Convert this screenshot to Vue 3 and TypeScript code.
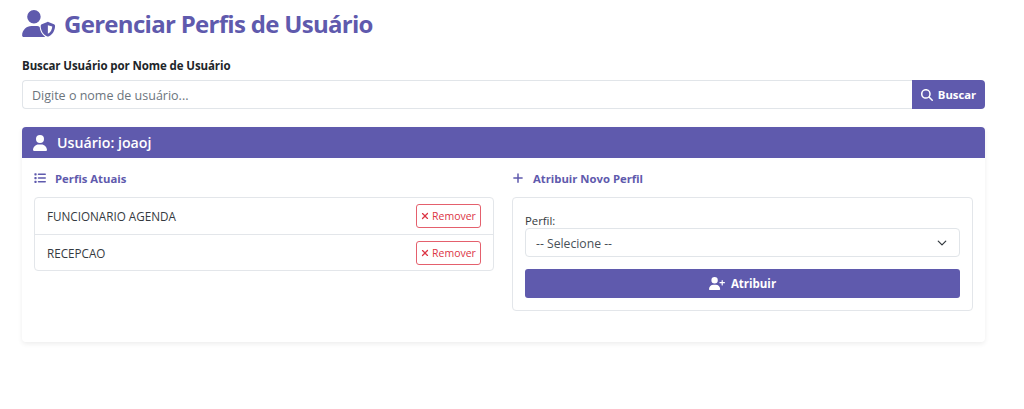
<template>
  <main class="page">
    <h1 class="page__title">
      <svg class="page__icon" viewBox="0 0 640 512" aria-hidden="true">
        <path d="M224 256A128 128 0 1 0 224 0a128 128 0 1 0 0 256zm-45.700 48C79.800 304 0 383.800 0 482.300C0 498.700 13.300 512 29.700 512H418.300c6.500 0 12.500-2.100 17.400-5.700C376.500 466 337 395 332 322.500c-14-12-30-18.500-46.300-18.500H178.300z" />
        <path fill-rule="evenodd" d="M488 224c3 0 6 .6 8.800 1.900l107 45.500c11.700 5 20.400 16.500 20.400 30.400c-.5 53-22.300 149.700-114.300 193.700c-13.500 6.400-29.400 6.400-42.900 0C375 451.500 352.800 355 352.300 301.800c0-13.900 8.700-25.400 20.400-30.400l106.500-45.500c2.800-1.300 5.800-1.900 8.800-1.900zm0 66.800v157.600c55.700-27 80.500-85.800 83.700-137.800L488 290.800z" />
      </svg>
      Gerenciar Perfis de Usuário
    </h1>

    <label class="search__label" for="busca">Buscar Usuário por Nome de Usuário</label>
    <div class="search">
      <input id="busca" class="search__input" type="text" placeholder="Digite o nome de usuário..." />
      <button class="search__btn" type="button">
        <svg class="search__icon" viewBox="0 0 512 512" aria-hidden="true">
          <path d="M416 208c0 45.900-14.900 88.300-40 122.700L502.600 457.400c12.500 12.500 12.500 32.800 0 45.300s-32.800 12.500-45.300 0L330.700 376c-34.400 25.200-76.800 40-122.700 40C93.100 416 0 322.900 0 208S93.100 0 208 0S416 93.100 416 208zM208 352a144 144 0 1 0 0-288 144 144 0 1 0 0 288z" />
        </svg>
        Buscar
      </button>
    </div>

    <section class="card">
      <header class="card__header">
        <svg class="card__icon" viewBox="0 0 448 512" aria-hidden="true">
          <path d="M224 256A128 128 0 1 0 224 0a128 128 0 1 0 0 256zm-45.700 48C79.800 304 0 383.800 0 482.300C0 498.700 13.300 512 29.700 512H418.300c16.400 0 29.700-13.300 29.700-29.700C448 383.800 368.200 304 269.700 304H178.300z" />
        </svg>
        <span>Usuário: joaoj</span>
      </header>

      <div class="card__body">
        <div class="col">
          <h2 class="col__title">
            <svg class="col__icon" viewBox="0 0 512 512" aria-hidden="true">
              <path d="M40 48C26.700 48 16 58.700 16 72v48c0 13.300 10.700 24 24 24H88c13.300 0 24-10.700 24-24V72c0-13.300-10.700-24-24-24H40zM192 64c-17.700 0-32 14.300-32 32s14.300 32 32 32H480c17.700 0 32-14.300 32-32s-14.300-32-32-32H192zm0 160c-17.700 0-32 14.300-32 32s14.300 32 32 32H480c17.700 0 32-14.300 32-32s-14.300-32-32-32H192zm0 160c-17.700 0-32 14.300-32 32s14.300 32 32 32H480c17.700 0 32-14.300 32-32s-14.300-32-32-32H192zM16 232v48c0 13.300 10.700 24 24 24H88c13.300 0 24-10.700 24-24V232c0-13.300-10.700-24-24-24H40c-13.300 0-24 10.700-24 24zM40 368c-13.300 0-24 10.700-24 24v48c0 13.300 10.700 24 24 24H88c13.300 0 24-10.700 24-24V392c0-13.300-10.700-24-24-24H40z" />
            </svg>
            Perfis Atuais
          </h2>
          <ul class="list">
            <li v-for="perfil in perfis" :key="perfil" class="list__item">
              <span>{{ perfil }}</span>
              <button class="remove" type="button">
                <svg class="remove__icon" viewBox="0 0 384 512" aria-hidden="true">
                  <path d="M342.600 150.600c12.500-12.500 12.500-32.800 0-45.300s-32.800-12.500-45.300 0L192 210.700 86.600 105.400c-12.500-12.500-32.800-12.500-45.300 0s-12.500 32.800 0 45.300L146.700 256 41.400 361.400c-12.500 12.500-12.500 32.800 0 45.300s32.800 12.500 45.300 0L192 301.300 297.400 406.600c12.500 12.500 32.800 12.500 45.300 0s12.500-32.800 0-45.300L237.300 256 342.600 150.600z" />
                </svg>
                Remover
              </button>
            </li>
          </ul>
        </div>

        <div class="col">
          <h2 class="col__title">
            <svg class="col__icon" viewBox="0 0 448 512" aria-hidden="true">
              <path d="M256 80c0-17.700-14.300-32-32-32s-32 14.300-32 32V224H48c-17.700 0-32 14.300-32 32s14.300 32 32 32H192V432c0 17.700 14.300 32 32 32s32-14.300 32-32V288H400c17.700 0 32-14.300 32-32s-14.300-32-32-32H256V80z" />
            </svg>
            Atribuir Novo Perfil
          </h2>
          <form class="assign" @submit.prevent>
            <label class="assign__label" for="perfil">Perfil:</label>
            <div class="select">
              <span>-- Selecione --</span>
              <svg class="select__arrow" viewBox="0 0 16 16" aria-hidden="true">
                <path fill="none" stroke="#343a40" stroke-linecap="round" stroke-linejoin="round" stroke-width="2" d="m2 5 6 6 6-6" />
              </svg>
            </div>
            <button class="assign__btn" type="submit">
              <svg class="assign__icon" viewBox="0 0 640 512" aria-hidden="true">
                <path d="M96 128a128 128 0 1 1 256 0A128 128 0 1 1 96 128zM0 482.300C0 383.800 79.800 304 178.300 304h91.400C368.200 304 448 383.800 448 482.300c0 16.400-13.300 29.700-29.700 29.700H29.700C13.300 512 0 498.700 0 482.300zM504 312V248H440c-13.300 0-24-10.700-24-24s10.700-24 24-24h64V136c0-13.300 10.700-24 24-24s24 10.700 24 24v64h64c13.300 0 24 10.700 24 24s-10.700 24-24 24H552v64c0 13.300-10.700 24-24 24s-24-10.700-24-24z" />
              </svg>
              Atribuir
            </button>
          </form>
        </div>
      </div>
    </section>
  </main>
</template>

<script setup lang="ts">
const perfis: string[] = ["FUNCIONARIO AGENDA", "RECEPCAO"];
</script>

<style>
html,
body {
  margin: 0;
  background: #fff;
}
</style>

<style scoped>
.page {
  box-sizing: border-box;
  width: 1024px;
  height: 409px;
  overflow: hidden;
  padding: 6px 39px 0 22px;
  font-family: "Open Sans", "Noto Sans", sans-serif;
  font-size: 12px;
  color: #212529;
}

.page__title {
  display: flex;
  align-items: center;
  gap: 8px;
  height: 34px;
  margin: 0 0 17px;
  font-size: 24px;
  font-weight: 700;
  letter-spacing: -0.7px;
  color: #5f5aad;
}

.page__icon {
  width: 34px;
  height: 27px;
  fill: #5f5aad;
}

.search__label {
  display: block;
  height: 23px;
  line-height: 17px;
  font-size: 11.5px;
  font-weight: 700;
  letter-spacing: -0.1px;
  color: #212529;
}

.search {
  display: flex;
  height: 29px;
}

.search__input {
  flex: 1;
  box-sizing: border-box;
  min-width: 0;
  padding: 1px 9px 0;
  border: 1px solid #e1e5e9;
  border-right: 0;
  border-radius: 4px 0 0 4px;
  outline: none;
  font: inherit;
  font-size: 12.5px;
}

.search__input::placeholder {
  color: #6c757d;
}

.search__btn {
  display: flex;
  align-items: center;
  justify-content: center;
  gap: 5px;
  width: 73px;
  padding: 0;
  border: 0;
  border-radius: 0 4px 4px 0;
  background: #5f5aad;
  color: #fff;
  font: inherit;
  font-size: 11.3px;
  font-weight: 700;
}

.search__icon {
  width: 12px;
  height: 12px;
  fill: #fff;
}

.card {
  height: 215px;
  margin-top: 18px;
  border-radius: 4px;
  background: #fff;
  box-shadow: 0 2px 5px rgba(0, 0, 0, 0.07);
}

.card__header {
  display: flex;
  align-items: center;
  gap: 10px;
  height: 31px;
  padding-left: 11px;
  border-radius: 4px 4px 0 0;
  background: #5f5aad;
  color: #fff;
  font-size: 14.2px;
  font-weight: 600;
}

.card__icon {
  width: 14px;
  height: 16px;
  fill: #fff;
}

.card__body {
  display: grid;
  grid-template-columns: 460px 461px;
  gap: 18px;
  padding: 12px 12px 0;
}

.col__title {
  display: flex;
  align-items: center;
  gap: 9px;
  height: 16px;
  margin: 0 0 11px;
  font-size: 11.3px;
  font-weight: 700;
  color: #5f5aad;
}

.col__icon {
  width: 12px;
  height: 12px;
  fill: #5f5aad;
}

.list {
  margin: 0;
  padding: 0;
  list-style: none;
  border: 1px solid #e3e6ea;
  border-radius: 4px;
}

.list__item {
  display: flex;
  align-items: center;
  justify-content: space-between;
  box-sizing: border-box;
  height: 36px;
  padding: 0 12px;
  font-size: 11.7px;
  color: #343a40;
}

.list__item + .list__item {
  border-top: 1px solid #e3e6ea;
}

.remove {
  display: flex;
  align-items: center;
  justify-content: center;
  gap: 3px;
  box-sizing: border-box;
  width: 65px;
  height: 24px;
  padding: 0;
  border: 1px solid #e4606d;
  border-radius: 3px;
  background: #fff;
  color: #dc3545;
  font: inherit;
  font-size: 10.5px;
}

.remove__icon {
  width: 8px;
  height: 10px;
  fill: #dc3545;
}

.assign {
  box-sizing: border-box;
  height: 114px;
  padding: 14px 12px 0;
  border: 1px solid #e3e6ea;
  border-radius: 4px;
}

.assign__label {
  display: block;
  height: 16px;
  line-height: 18px;
  font-size: 11.3px;
  color: #343a40;
}

.select {
  display: flex;
  align-items: center;
  justify-content: space-between;
  box-sizing: border-box;
  height: 29px;
  padding: 1px 12px 0 10px;
  border: 1px solid #e1e5e9;
  border-radius: 4px;
  font-size: 12.2px;
  color: #495057;
}

.select__arrow {
  width: 10px;
  height: 10px;
}

.assign__btn {
  display: flex;
  align-items: center;
  justify-content: center;
  gap: 6px;
  width: 100%;
  height: 29px;
  margin-top: 12px;
  padding: 0;
  border: 0;
  border-radius: 3px;
  background: #5f5aad;
  color: #fff;
  font: inherit;
  font-size: 11.5px;
  font-weight: 700;
}

.assign__icon {
  width: 16px;
  height: 13px;
  fill: #fff;
}
</style>
